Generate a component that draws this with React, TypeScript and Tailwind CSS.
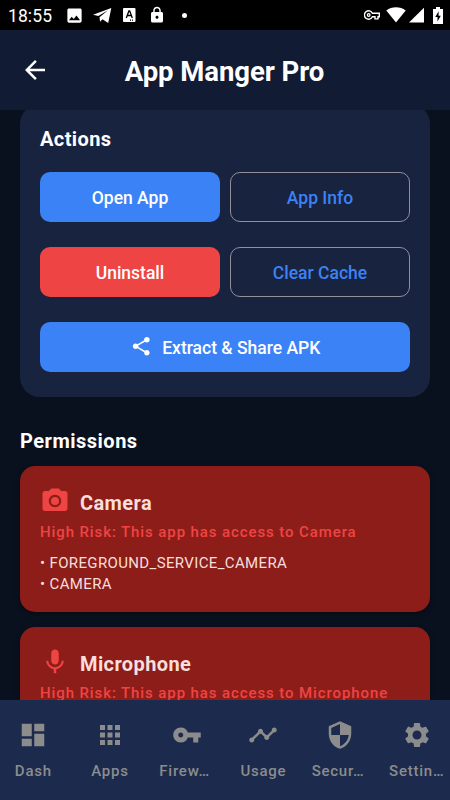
import type { ReactNode } from 'react'
import type { IconType } from 'react-icons'
import {
  MdApps,
  MdArrowBack,
  MdCameraAlt,
  MdDashboard,
  MdImage,
  MdLock,
  MdMic,
  MdSecurity,
  MdSettings,
  MdShare,
  MdTimeline,
  MdVpnKey
} from 'react-icons/md'

const tabs: { label: string; icon: IconType; clipped?: boolean }[] = [
  { label: 'Dash', icon: MdDashboard },
  { label: 'Apps', icon: MdApps },
  { label: 'Firew…', icon: MdVpnKey, clipped: true },
  { label: 'Usage', icon: MdTimeline },
  { label: 'Secur…', icon: MdSecurity, clipped: true },
  { label: 'Settin…', icon: MdSettings }
]

const permissions: { name: string; icon: IconType; entries: string[] }[] = [
  { name: 'Camera', icon: MdCameraAlt, entries: ['FOREGROUND_SERVICE_CAMERA', 'CAMERA'] },
  { name: 'Microphone', icon: MdMic, entries: [] }
]

function StatusBar() {
  return (
    <div className="flex h-[30px] shrink-0 items-center bg-black text-white">
      <span className="ml-2 w-[55px] pt-px text-[17.5px] leading-[30px] tracking-[0.1px]">18:55</span>
      <MdImage className="ml-[2px] h-[19px] w-[19px]" />
      <svg className="ml-[9px] h-[15px] w-[19px]" viewBox="0 0 19 15" fill="currentColor">
        <path d="M18.3 0 15.2 15l-5.7-3.8-2.4 2.5-.6-4.400L15 2.300 5.300 8 0 6.700z" />
      </svg>
      <svg className="ml-[11px] h-[14px] w-[13px]" viewBox="0 0 13 14" fill="none">
        <rect width="12.5" height="14" rx="1" fill="#fff" />
        <path d="m3.3 10 2.6-7h.8l2.6 7M4.3 7.5h4M7 12.2h1m1 0h1" stroke="#000" strokeWidth="1.3" />
      </svg>
      <MdLock className="ml-[12px] h-[18px] w-[18px]" />
      <span className="ml-[16px] h-[5px] w-[5px] rounded-full bg-white" />
      <div className="ml-auto mr-[7px] flex items-center">
        <svg className="h-[10px] w-4" viewBox="0 0 16 10" fill="none" stroke="currentColor">
          <path d="M8.4 3.2A4.2 4.2 0 1 0 8.4 6.8H11v2.1h3V6.8h1.3V3.2z" strokeWidth="1.4" />
          <circle cx="4.7" cy="5" r="1.3" strokeWidth="1.3" />
        </svg>
        <svg className="ml-[6px] h-4 w-5" viewBox="0 0 20 16" fill="currentColor">
          <path d="M.3 3.5C5.8-.7 14.2-.7 19.7 3.5L10 15.6z" />
        </svg>
        <svg className="ml-[3px] h-4 w-[15px]" viewBox="0 0 15 16" fill="currentColor">
          <path d="M15 .7v14.8H0z" />
        </svg>
        <svg className="ml-[9px] h-[17px] w-[10px]" viewBox="0 0 10 17">
          <path d="M3 0h4v2h3v15H0V2h3z" fill="#fff" />
          <path d="M5.6 4.3 2.3 10h2.2v4.5L7.8 8.7H5.6z" fill="#000" />
        </svg>
      </div>
    </div>
  )
}

function ActionButton({ className, children }: { className: string; children: ReactNode }) {
  return (
    <button
      className={`flex h-[50px] items-center justify-center rounded-[10px] pt-[3px] text-[17.5px] font-medium ${className}`}
    >
      {children}
    </button>
  )
}

function PermissionCard({ name, icon: Icon, entries }: { name: string; icon: IconType; entries: string[] }) {
  return (
    <div className="h-[146.3px] shrink-0 rounded-[15px] bg-[#8c1d18] px-5 pt-5 shadow-[0_2px_5px_rgba(0,0,0,0.4)]">
      <div className="flex h-[30px] items-center gap-[10px]">
        <Icon className="h-[30px] w-[30px] text-[#ef4444]" />
        <h3 className="pt-[3px] text-[20px] leading-[30px] font-bold tracking-[0.4px] text-[#f9dedc]">{name}</h3>
      </div>
      <p className="mt-[6px] text-[15px] leading-5 font-medium tracking-[0.9px] whitespace-nowrap text-[#ef4444]">
        High Risk: This app has access to {name}
      </p>
      <ul className="mt-[11px] text-[15px] leading-[20.5px] tracking-[0.36px] text-[#f9dedc]">
        {entries.map((entry) => (
          <li key={entry}>• {entry}</li>
        ))}
      </ul>
    </div>
  )
}

export default function App() {
  return (
    <div className="flex h-[800px] w-[450px] flex-col overflow-hidden bg-[#0a111e] font-[Roboto,sans-serif]">
      <StatusBar />

      <header className="relative z-10 flex h-20 shrink-0 items-center bg-[#111b33] px-5 text-white">
        <MdArrowBack className="h-[30px] w-[30px]" />
        <h1 className="flex-1 pt-[3px] pr-[31px] text-center text-[27.5px] font-bold tracking-[-0.06px]">
          App Manger Pro
        </h1>
      </header>

      <main className="flex min-h-0 flex-1 flex-col overflow-hidden px-5">
        {/* Card is scrolled slightly under the header */}
        <section className="-mt-[6px] h-[292.5px] shrink-0 rounded-[20px] bg-[#18233f] px-5 pt-5">
          <h2 className="text-[20px] leading-[30px] font-bold tracking-[0.4px] text-white">Actions</h2>
          <div className="mt-[17.5px] grid grid-cols-2 gap-x-[10px] gap-y-[25px]">
            <ActionButton className="bg-[#3b82f6] text-white">Open App</ActionButton>
            <ActionButton className="border border-[#938f99] text-[#3b82f6]">App Info</ActionButton>
            <ActionButton className="bg-[#ef4444] text-white">Uninstall</ActionButton>
            <ActionButton className="border border-[#938f99] text-[#3b82f6]">Clear Cache</ActionButton>
            <ActionButton className="col-span-2 gap-[10px] bg-[#3b82f6] text-white">
              <MdShare className="-mt-[3px] h-[22.5px] w-[22.5px]" />
              Extract & Share APK
            </ActionButton>
          </div>
        </section>

        <h2 className="mt-[29.5px] text-[20px] leading-[30px] font-bold tracking-[0.5px] text-white">Permissions</h2>
        <div className="mt-[10.1px] flex flex-col gap-[15px]">
          {permissions.map((permission) => (
            <PermissionCard key={permission.name} {...permission} />
          ))}
        </div>
      </main>

      <nav className="relative z-10 flex h-[100px] shrink-0 gap-[10px] bg-[#1b2a4d] text-[#8c8c8c]">
        {tabs.map(({ label, icon: Icon, clipped }) => (
          <button key={label} className="flex flex-1 flex-col items-center pt-5">
            <Icon className="h-[30px] w-[30px]" />
            <span
              className={`mt-[11px] text-[15px] leading-5 font-medium tracking-[0.75px] ${clipped ? 'pr-1' : ''}`}
            >
              {label}
            </span>
          </button>
        ))}
      </nav>
    </div>
  )
}
